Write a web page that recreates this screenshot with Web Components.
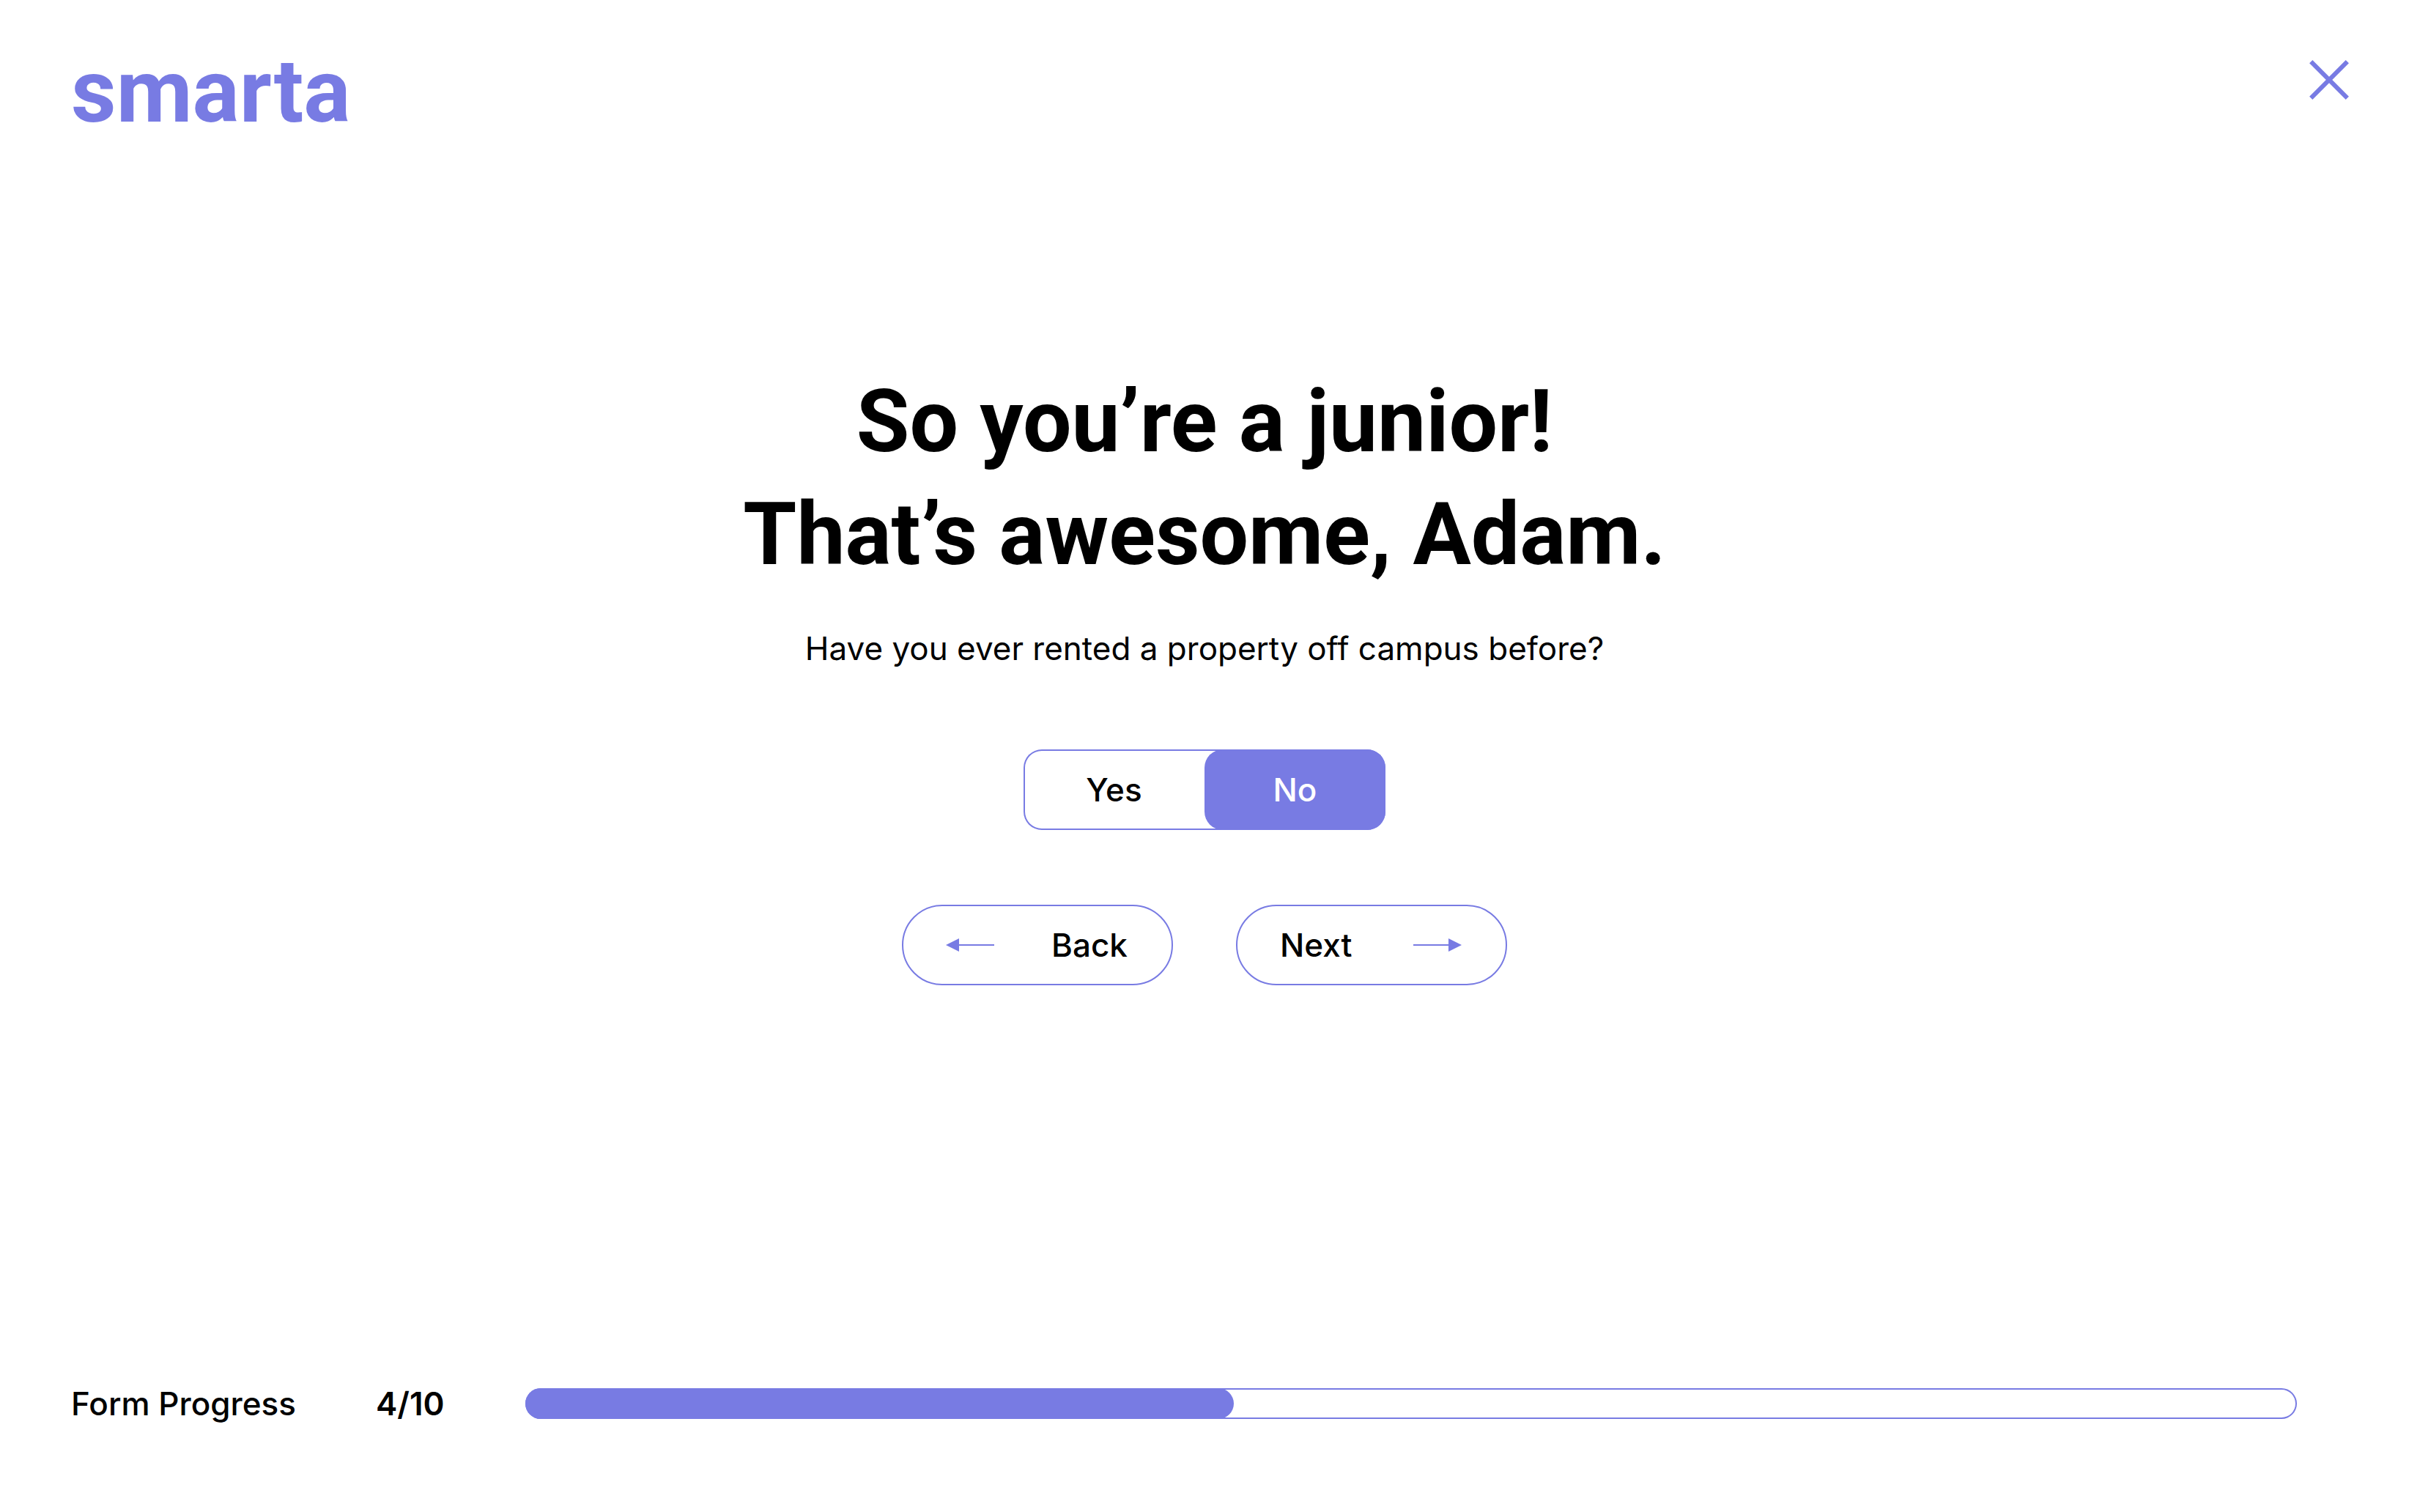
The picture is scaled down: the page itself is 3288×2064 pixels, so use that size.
<!DOCTYPE html>
<html lang="en">
<head>
<meta charset="utf-8">
<title>smarta</title>
<style>
  :root { --brand: #787be3; --display: Roboto, "Liberation Sans", sans-serif; }
  body { margin: 0; background: #fff; color: #000; font: 400 44px/60px Inter, "Open Sans", sans-serif; }
</style>
</head>
<body>
<smarta-form-page>
  <smarta-header slot="header"></smarta-header>
  <smarta-question>
    <span slot="title">So you’re a junior!<br>That’s awesome, Adam.</span>
    <span slot="prompt">Have you ever rented a property off campus before?</span>
    <smarta-toggle></smarta-toggle>
    <smarta-nav slot="nav"></smarta-nav>
  </smarta-question>
  <smarta-progress slot="footer" value="4" max="10"></smarta-progress>
</smarta-form-page>
<script>
const define = (name, html) => customElements.define(name, class extends HTMLElement {
  constructor() {
    super();
    this.attachShadow({ mode: 'open' }).innerHTML = html(this);
  }
});

define('smarta-form-page', () => `
  <style>
    :host { display: flex; flex-direction: column; min-height: 100vh; }
    main { flex: 1; display: flex; flex-direction: column; align-items: center; justify-content: center; padding-bottom: 238px; }
  </style>
  <slot name="header"></slot>
  <main><slot></slot></main>
  <slot name="footer"></slot>`);

define('smarta-header', () => `
  <style>
    :host { display: block; }
    header { display: flex; justify-content: space-between; align-items: flex-start; padding: 55px 55px 0 97px; }
    a { font: 700 120px/140px var(--display); color: var(--brand); text-decoration: none; }
    button { display: flex; padding: 27px; border: 0; background: none; cursor: pointer; }
    svg { width: 54px; height: 54px; display: block; }
  </style>
  <header>
    <a href="#">smarta</a>
    <button type="button" aria-label="Close">
      <svg viewBox="0 0 54 54" fill="none" stroke="var(--brand)" stroke-width="6"><path d="M2.2 2.2 51.8 51.8M51.8 2.2 2.2 51.8"/></svg>
    </button>
  </header>`);

define('smarta-question', () => `
  <style>
    :host { display: flex; flex-direction: column; align-items: center; text-align: center; }
    h1 { margin: 0; font: 700 118px/154px var(--display); }
    p { margin: 48px 0 108px; }
    .nav { margin-top: 102px; }
  </style>
  <h1><slot name="title"></slot></h1>
  <p><slot name="prompt"></slot></p>
  <slot></slot>
  <div class="nav"><slot name="nav"></slot></div>`);

define('smarta-toggle', () => `
  <style>
    :host { display: block; }
    fieldset { display: flex; margin: 0; padding: 0; border: 0; border-radius: 25px; box-shadow: inset 0 0 0 2px var(--brand); }
    label { width: 247px; line-height: 110px; border-radius: 25px; cursor: pointer; font-weight: 500; text-align: center; }
    input { appearance: none; position: absolute; margin: 0; }
    label:has(:checked) { background: var(--brand); color: #fff; }
  </style>
  <fieldset aria-label="Rented off campus before">
    <label><input type="radio" name="rented" value="yes">Yes</label>
    <label><input type="radio" name="rented" value="no" checked>No</label>
  </fieldset>`);

define('smarta-nav', () => `
  <style>
    :host { display: flex; gap: 86px; }
    button { display: flex; align-items: center; justify-content: space-between; width: 370px; height: 110px; padding: 0 60px 0 58px;
      border: 2px solid var(--brand); border-radius: 55px; background: none; font: inherit; font-weight: 500; color: inherit; cursor: pointer; }
    svg { width: 66px; height: 18px; fill: var(--brand); }
  </style>
  <button type="button">
    <svg viewBox="0 0 66 18"><path d="M0 9 18 0V8H66V10H18V18Z"/></svg>Back
  </button>
  <button type="button">
    Next<svg viewBox="0 0 66 18"><path d="M66 9 48 0V8H0V10H48V18Z"/></svg>
  </button>`);

define('smarta-progress', el => `
  <style>
    :host { display: flex; align-items: center; padding: 0 153px 118px 97px; }
    label { width: 416px; font-weight: 500; }
    output { width: 204px; font-weight: 600; }
    progress { appearance: none; flex: 1; height: 42px; border: 0; }
    progress::-webkit-progress-bar { background: #fff; border-radius: 21px; box-shadow: inset 0 0 0 2px var(--brand); }
    progress::-webkit-progress-value { background: var(--brand); border-radius: 21px; }
  </style>
  <label for="bar">Form Progress</label>
  <output for="bar">${el.getAttribute('value')}/${el.getAttribute('max')}</output>
  <progress id="bar" value="${el.getAttribute('value')}" max="${el.getAttribute('max')}"></progress>`);
</script>
</body>
</html>
